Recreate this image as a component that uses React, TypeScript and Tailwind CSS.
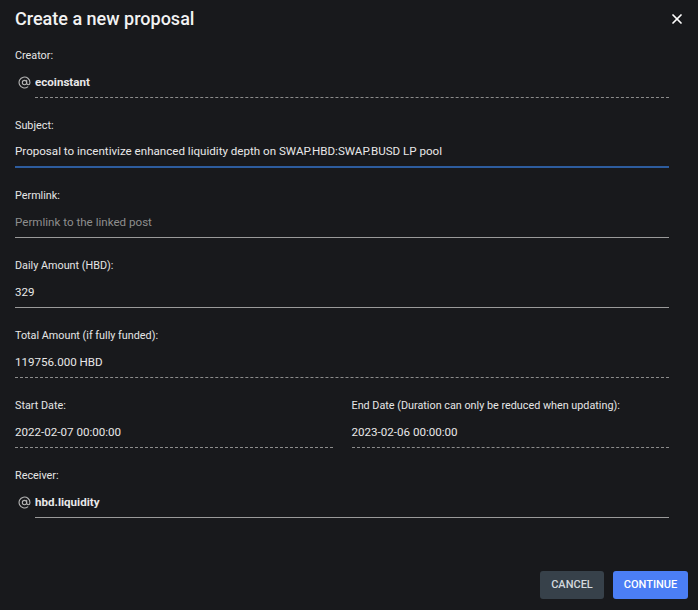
import { X, AtSign } from 'lucide-react';

type FieldProps = {
  label: string;
  value?: string;
  placeholder?: string;
  line: 'dashed' | 'solid' | 'focus';
  at?: boolean;
};

function Field({ label, value, placeholder, line, at }: FieldProps) {
  const lineClass =
    line === 'dashed'
      ? 'border-b border-dashed border-[#8c8c8c]'
      : line === 'focus'
        ? 'border-b-2 border-[#2d5c9e]'
        : 'border-b border-[#9a9a9a]';
  return (
    <div className="pb-[19px]">
      <div className="h-4 text-[10.8px] leading-4 pt-[1px] text-[#e6e6e6]">{label}</div>
      <div className="flex items-stretch">
        {at && (
          <div className="w-5 flex items-center pt-[4px]">
            <AtSign size={13} strokeWidth={2} className="text-[#b5b5b5] ml-[3px]" />
          </div>
        )}
        <div className={`flex-1 h-[35px] flex items-center pt-[5px] ${lineClass}`}>
          {value ? (
            <span className={`text-[11.6px] text-[#e8e8e8] ${at ? 'font-bold text-[11.3px]' : ''}`}>{value}</span>
          ) : (
            <span className="text-[11.6px] text-[#8e8e8e]">{placeholder}</span>
          )}
        </div>
      </div>
    </div>
  );
}

export default function App() {
  return (
    <div className="w-[698px] h-[610px] bg-[#18191c] text-white font-['Roboto',sans-serif] flex flex-col">
      <div className="h-[37px] px-[15px] flex items-center justify-between">
        <h2 className="text-[18px] font-medium text-[#f2f2f2]">Create a new proposal</h2>
        <X size={16} strokeWidth={2.6} className="text-white mr-[-2px]" />
      </div>
      <div className="pl-[15px] pr-[29px] pt-[10px]">
        <Field label="Creator:" value="ecoinstant" line="dashed" at />
        <Field
          label="Subject:"
          value="Proposal to incentivize enhanced liquidity depth on SWAP.HBD:SWAP.BUSD LP pool"
          line="focus"
        />
        <Field label="Permlink:" placeholder="Permlink to the linked post" line="solid" />
        <Field label="Daily Amount (HBD):" value="329" line="solid" />
        <Field label="Total Amount (if fully funded):" value="119756.000 HBD" line="dashed" />
        <div className="grid grid-cols-2 gap-[19px]">
          <Field label="Start Date:" value="2022-02-07 00:00:00" line="dashed" />
          <Field label="End Date (Duration can only be reduced when updating):" value="2023-02-06 00:00:00" line="dashed" />
        </div>
        <Field label="Receiver:" value="hbd.liquidity" line="solid" at />
      </div>
      <div className="mt-auto flex justify-end gap-[9px] px-[10px] pb-[11px]">
        <button className="h-[28px] w-[64px] rounded-[3px] bg-[#37414a] text-[11px] font-medium text-[#d3d9de] uppercase">
          Cancel
        </button>
        <button className="h-[28px] w-[75px] rounded-[3px] bg-[#4b7ef5] text-[11px] font-medium text-white uppercase">
          Continue
        </button>
      </div>
    </div>
  );
}
